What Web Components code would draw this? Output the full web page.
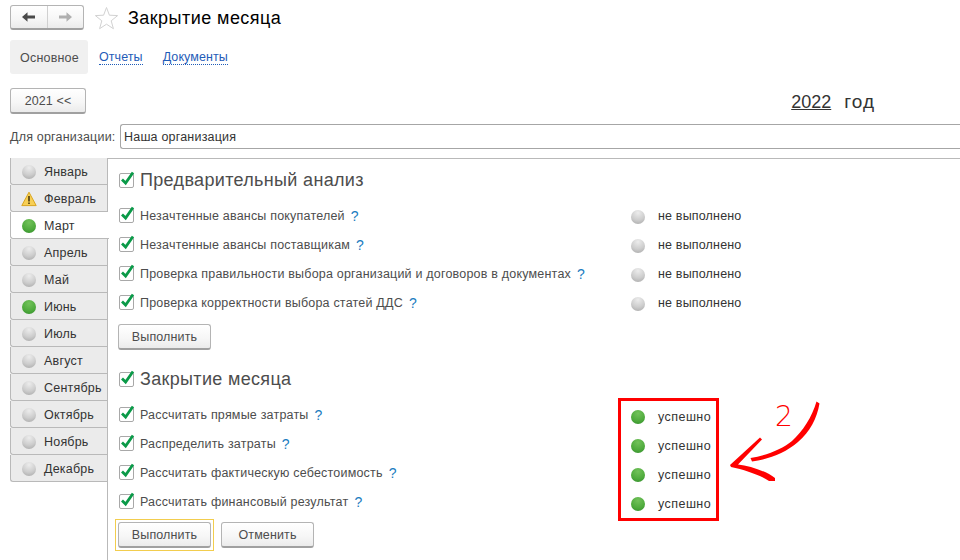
<!DOCTYPE html>
<html lang="ru">
<head>
<meta charset="utf-8">
<title>Закрытие месяца</title>
<style>
  html, body { margin: 0; padding: 0; background: #fff; }
  body { font-family: "Liberation Sans", Arial, sans-serif; font-size: 12.5px; letter-spacing: 0.2px; color: #4d4d4d; }
</style>
</head>
<body>
<closing-page></closing-page>

<script>
const buttonStyles = `
  background: linear-gradient(#ffffff, #f6f6f6 60%, #ebebeb);
  border: 1px solid #b4b4b4;
  border-bottom: 2px solid #a0a0a0;
  border-radius: 3px;
  box-sizing: border-box;
`;

class UiButton extends HTMLElement {
    connectedCallback() {
        const shadowRoot = this.attachShadow({mode: 'open'});
        shadowRoot.innerHTML = `
          <style>
            :host { display: inline-block; letter-spacing: 0.12px; }
            :host([focused]) { border: 1px solid #f2cd4e; padding: 2px; margin: -3px; }
            div {
              ${buttonStyles}
              height: 26px;
              width: var(--w, 93px);
              display: flex;
              align-items: center;
              justify-content: center;
              color: #4d4d4d;
            }
          </style>
          <div><slot></slot></div>
        `;
    }
}

class NavButtons extends HTMLElement {
    connectedCallback() {
        const shadowRoot = this.attachShadow({mode: 'open'});
        shadowRoot.innerHTML = `
          <style>
            :host { display: flex; ${buttonStyles} width: 74px; height: 25px; }
            div { flex: 1; display: flex; align-items: center; justify-content: center; }
            div + div { border-left: 1px solid #d0d0d0; }
          </style>
          <div><svg width="15" height="12" viewBox="0 0 15 12"><path d="M1 6 6.5 1.2V4.4H14V7.6H6.5V10.8Z" fill="#4a4a4a"/></svg></div>
          <div><svg width="15" height="12" viewBox="0 0 15 12"><path d="M14 6 8.5 1.2V4.4H1V7.6H8.5V10.8Z" fill="#b0b0b0"/></svg></div>
        `;
    }
}

class PageHeader extends HTMLElement {
    connectedCallback() {
        const shadowRoot = this.attachShadow({mode: 'open'});
        shadowRoot.innerHTML = `
          <style>
            :host { display: flex; align-items: center; height: 25px; padding: 5px 0 0 10px; }
            svg { margin-left: 10px; }
            h1 { margin: 2px 0 0 9px; font: normal 18px "Liberation Sans", Arial, sans-serif; letter-spacing: 0.45px; color: #000; }
          </style>
          <nav-buttons></nav-buttons>
          <svg width="25" height="24" viewBox="0 0 25 24"><path d="M12.5 1.5 15.4 9.2 23.6 9.6 17.2 14.8 19.4 22.7 12.5 18.2 5.6 22.7 7.8 14.8 1.4 9.6 9.6 9.2Z" fill="#fff" stroke="#d2d2d2"/></svg>
          <h1><slot></slot></h1>
        `;
    }
}

class PageTabs extends HTMLElement {
    connectedCallback() {
        const shadowRoot = this.attachShadow({mode: 'open'});
        shadowRoot.innerHTML = `
          <style>
            :host { display: flex; align-items: center; height: 34px; margin: 10px 0 0 10px; }
            span { background: #f0f0f0; border-radius: 3px; width: 78px; height: 34px; box-sizing: border-box; padding: 1px 0 0 1px; display: flex; align-items: center; justify-content: center; color: #4d4d4d; }
            a { color: #1f5cb8; text-decoration: none; border-bottom: 1px dotted #1f5cb8; line-height: 13px; letter-spacing: 0.08px; margin: 2px 0 0 11px; }
            a + a { margin-left: 20px; }
          </style>
          <span>Основное</span>
          <a href="#">Отчеты</a>
          <a href="#">Документы</a>
        `;
    }
}

class YearBar extends HTMLElement {
    connectedCallback() {
        const shadowRoot = this.attachShadow({mode: 'open'});
        shadowRoot.innerHTML = `
          <style>
            :host { display: flex; align-items: center; justify-content: space-between; height: 26px; margin: 14px 0 0 10px; padding-right: 85px; }
            b { font: normal 18px "Liberation Sans", Arial, sans-serif; letter-spacing: 0; color: #333; padding-top: 2px; }
            u { margin-right: 13px; }
            i { font-style: normal; font-size: 19px; letter-spacing: 1px; }
          </style>
          <ui-button style="--w: 76px">2021 &lt;&lt;</ui-button>
          <b><u>2022</u><i>год</i></b>
        `;
    }
}

class OrgField extends HTMLElement {
    connectedCallback() {
        const shadowRoot = this.attachShadow({mode: 'open'});
        shadowRoot.innerHTML = `
          <style>
            :host { display: flex; align-items: center; height: 25px; margin: 10px 0 0 10px; }
            label { width: 110px; flex: none; white-space: nowrap; }
            div { flex: 1; height: 25px; box-sizing: border-box; border: 1px solid #a6a6a6; border-right: 0; border-radius: 3px 0 0 3px; padding-left: 3px; display: flex; align-items: center; color: #333; }
          </style>
          <label>Для организации:</label>
          <div><slot></slot></div>
        `;
    }
}

class StatusDot extends HTMLElement {
    connectedCallback() {
        const shadowRoot = this.attachShadow({mode: 'open'});
        shadowRoot.innerHTML = `
          <style>
            :host { display: block; width: 14px; height: 14px; border-radius: 50%; flex: none;
              background: radial-gradient(circle at 50% 20%, #ececec, #cdcdcd 55%, #a6a6a6); }
            :host([state="ok"]) { background: radial-gradient(circle at 50% 25%, #72c25a, #4eaa3c 60%, #2f8a2a); }
            :host([state="warn"]) { background: none; }
            svg { display: block; margin: -1px; }
          </style>
          ${this.getAttribute('state') === 'warn'
            ? '<svg width="16" height="16" viewBox="0 0 16 16"><path d="M8 1.2 15.2 14.6H.8Z" fill="#f7cf55" stroke="#d9a520" stroke-linejoin="round"/><path d="M7.2 5H8.8V10.4H7.2ZM7.2 11.4H8.8V13H7.2Z" fill="#4a3a10"/></svg>'
            : ''}
        `;
    }
}

class MonthTabs extends HTMLElement {
    connectedCallback() {
        const shadowRoot = this.attachShadow({mode: 'open'});
        const months = [
            ['Январь', ''], ['Февраль', 'warn'], ['Март', 'ok', true], ['Апрель', ''],
            ['Май', ''], ['Июнь', 'ok'], ['Июль', ''], ['Август', ''],
            ['Сентябрь', ''], ['Октябрь', ''], ['Ноябрь', ''], ['Декабрь', '']
        ];
        const rows = months.map(([name, state, active]) => `
          <div class="tab${active ? ' active' : ''}">
            <status-dot state="${state}"></status-dot><span>${name}</span>
          </div>`).join('');
        shadowRoot.innerHTML = `
          <style>
            :host { display: block; width: 98px; flex: none; }
            .tab { box-sizing: border-box; height: 27px; display: flex; align-items: center; gap: 8px; padding: 2px 0 0 11px; background: #ebebeb; border: 1px solid #b9b9b9; border-top: 0; border-right: 0; border-radius: 0 0 0 3px; color: #333; }
            .tab:first-child { border-top: 1px solid #b9b9b9; border-radius: 3px 0 0 3px; padding-top: 1px; }
            .active { background: #fff; margin-right: -1px; position: relative; }
          </style>
          ${rows}
        `;
    }
}

class CheckBox extends HTMLElement {
    connectedCallback() {
        const shadowRoot = this.attachShadow({mode: 'open'});
        shadowRoot.innerHTML = `
          <style>
            :host { display: block; width: 15px; height: 15px; flex: none; position: relative; box-sizing: border-box; border: 1px solid #a8a8a8; border-radius: 2px; background: #fff; }
            svg { position: absolute; left: 0; top: -4px; }
          </style>
          <svg width="15" height="16" viewBox="0 0 15 16"><path d="M2 9.5 5.6 13 13 2.5" fill="none" stroke="#0a9a48" stroke-width="2.8"/></svg>
        `;
    }
}

class CheckRow extends HTMLElement {
    connectedCallback() {
        const shadowRoot = this.attachShadow({mode: 'open'});
        const state = this.getAttribute('state') || '';
        const done = state === 'ok';
        shadowRoot.innerHTML = `
          <style>
            :host { display: grid; grid-template-columns: 512px 14px auto; align-items: center; height: 29px; }
            .name { display: flex; align-items: center; gap: 6px; white-space: nowrap; }
            .help { color: #1b7cc0; font-size: 14px; line-height: 14px; }
            status-dot { margin-top: ${done ? 4 : 2}px; }
            .result { margin: ${done ? 4 : 0}px 0 0 13px; letter-spacing: ${done ? 0.45 : 0.17}px; color: #333; }
          </style>
          <div class="name"><check-box></check-box><span><slot></slot></span><span class="help">?</span></div>
          <status-dot state="${state}"></status-dot>
          <div class="result">${done ? 'успешно' : 'не выполнено'}</div>
        `;
    }
}

class SectionHead extends HTMLElement {
    connectedCallback() {
        const shadowRoot = this.attachShadow({mode: 'open'});
        shadowRoot.innerHTML = `
          <style>
            :host { display: flex; align-items: center; gap: 6px; height: 24px; font-size: 18px; letter-spacing: 0.33px; color: #4d4d4d; }
          </style>
          <check-box></check-box><slot></slot>
        `;
    }
}

class ClosingPage extends HTMLElement {
    connectedCallback() {
        const shadowRoot = this.attachShadow({mode: 'open'});
        shadowRoot.innerHTML = `
          <style>
            :host { display: block; position: relative; width: 960px; height: 560px; overflow: hidden; }
            .panel { display: flex; margin: 9px 0 0 10px; height: 402px; }
            .content { flex: 1; border-top: 1px solid #b9b9b9; border-left: 1px solid #b9b9b9; margin-left: -1px; padding: 9px 0 0 11px; }
            .rows-a { margin-top: 9px; }
            .rows-b { margin-top: 9px; }
            .actions { display: flex; gap: 10px; margin-left: -1px; }
            .mark { position: absolute; left: 618px; top: 398px; width: 101px; height: 123px; box-sizing: border-box; border: 3px solid #f00; }
            .arrow { position: absolute; left: 725px; top: 395px; }
            .two { position: absolute; left: 775px; top: 400px; font: 200 28px "DejaVu Sans", sans-serif; color: #f00; line-height: 34px; }
          </style>
          <page-header>Закрытие месяца</page-header>
          <page-tabs></page-tabs>
          <year-bar></year-bar>
          <org-field>Наша организация</org-field>
          <div class="panel">
            <month-tabs></month-tabs>
            <div class="content">
              <section-head>Предварительный анализ</section-head>
              <div class="rows-a">
                <check-row>Незачтенные авансы покупателей</check-row>
                <check-row>Незачтенные авансы поставщикам</check-row>
                <check-row>Проверка правильности выбора организаций и договоров в документах</check-row>
                <check-row>Проверка корректности выбора статей ДДС</check-row>
              </div>
              <div class="actions" style="margin-top: 7px"><ui-button>Выполнить</ui-button></div>
              <section-head style="margin-top: 17px">Закрытие месяца</section-head>
              <div class="rows-b">
                <check-row state="ok">Рассчитать прямые затраты</check-row>
                <check-row state="ok">Распределить затраты</check-row>
                <check-row state="ok">Рассчитать фактическую себестоимость</check-row>
                <check-row state="ok">Рассчитать финансовый результат</check-row>
              </div>
              <div class="actions" style="margin-top: 6px"><ui-button focused>Выполнить</ui-button><ui-button>Отменить</ui-button></div>
            </div>
          </div>
          <div class="mark"></div>
          <span class="two">2</span>
          <svg class="arrow" width="105" height="95" viewBox="725 395 105 95">
            <path d="M816.5 401.5 819.5 403.5C817 418 810 432 798 442C785 453 770 459 752 461.5L750.5 458C768 455 782 449 792 441C803 431 812 417 816.5 401.5Z" fill="#f00"/>
            <path d="M730 465 760 437.5 762 439.5 738 464.5C750 466 766 471 775 478V481H769C760 475 745 470 731 467Z" fill="#f00"/>
          </svg>
        `;
    }
}

customElements.define('ui-button', UiButton);
customElements.define('nav-buttons', NavButtons);
customElements.define('page-header', PageHeader);
customElements.define('page-tabs', PageTabs);
customElements.define('year-bar', YearBar);
customElements.define('org-field', OrgField);
customElements.define('status-dot', StatusDot);
customElements.define('month-tabs', MonthTabs);
customElements.define('check-box', CheckBox);
customElements.define('check-row', CheckRow);
customElements.define('section-head', SectionHead);
customElements.define('closing-page', ClosingPage);
</script>
</body>
</html>
